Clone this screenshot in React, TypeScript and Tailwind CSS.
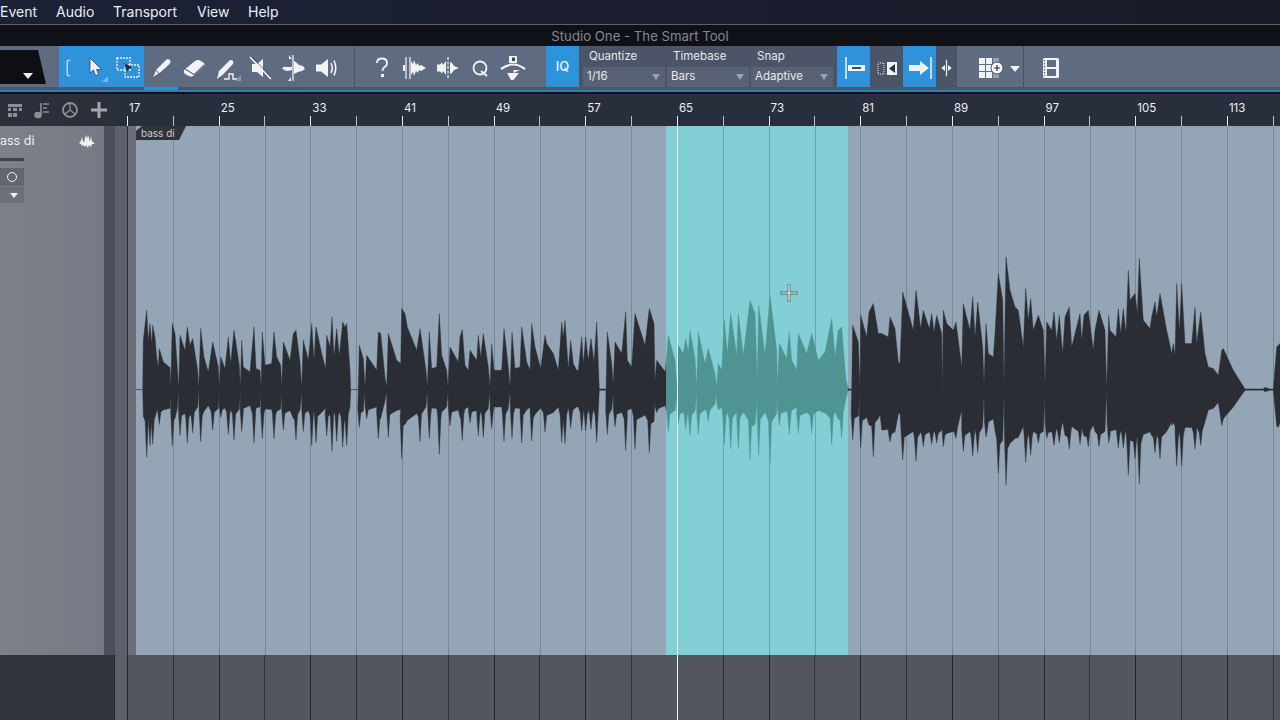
import React from 'react'

const font = { fontFamily: 'Inter, "Liberation Sans", sans-serif' }

// envelope points read off the picture: [x, y] in crop coords
const partA = [[18,298],[38,298],[40,150],[50,60],[55,150],[60,100],[65,160],[68,105],[75,140],[80,200],[85,230],[88,175],[100,215],[120,232],[122,290],[127,100],[135,130],[142,230],[146,295],[150,135],[165,180],[172,110],[180,165],[188,145],[203,240],[206,295],[212,115],[222,200],[235,245],[248,155],[265,230],[268,290],[272,200],[285,235],[295,140],[302,220],[312,120],[328,225],[331,290],[335,150],[340,230],[360,245],[372,110],[378,235],[390,240],[393,290],[397,125],[405,225],[425,220],[432,125],[440,200],[452,225],[455,290],[460,155],[480,210],[490,130],[498,120],[510,215],[515,290],[520,150],[535,210],[545,100],[552,210],[558,110],[575,190],[587,235],[590,135],[600,170],[606,80],[612,200],[620,115],[628,195],[638,95],[645,110],[650,100],[660,240],[662,298],[685,298],[688,165],[700,205],[705,290],[710,195],[740,240],[745,125],[752,130],[765,260],[770,290],[775,130],[800,210],[812,220],[815,55],[825,70],[832,110],[860,180],[870,115],[888,240],[892,290],[898,125],[905,235],[920,230],[928,70],[935,195],[950,240],[954,290],[960,170],[985,215],[990,140],[997,118],[1005,225],[1015,240],[1020,180],[1040,210],[1045,135],[1052,200],[1060,130],[1075,230],[1080,290],[1085,160],[1092,240],[1115,240],[1122,115],[1135,230],[1140,290],[1146,125],[1155,235],[1170,230],[1175,110],[1190,215],[1200,240]]
const partB = [[35,130],[45,200],[62,265],[75,165],[80,190],[100,220],[115,270],[125,125],[130,170],[135,120],[145,265],[152,180],[160,250],[170,270],[175,270],[185,170],[190,250],[197,170],[205,240],[213,175],[222,245],[230,125],[238,326],[258,326],[262,155],[275,250],[280,310],[285,185],[305,220],[317,95],[322,240],[335,260],[345,100],[375,195],[388,85],[402,130],[405,300],[410,240],[436,275],[445,165],[465,240],[470,320],[475,195],[490,220],[497,175],[505,215],[510,150],[525,235],[530,320],[535,155],[555,250],[565,205],[585,280],[590,320],[595,250],[605,270],[613,120],[622,220],[632,100],[650,225],[655,100],[670,225],[690,60],[705,100],[712,300],[716,75],[735,225],[750,45],[770,210],[772,320],[778,190],[800,235],[808,155],[815,240],[830,270],[835,160],[860,220],[875,160],[895,240],[915,215],[935,115],[945,230],[955,150],[965,140],[978,300],[985,326],[995,326],[998,135],[1015,185],[1020,320],[1022,105],[1040,170],[1047,95],[1060,70],[1075,160]]
const partC = [[5,250],[25,260],[30,200],[45,235],[55,335],[60,340],[68,125],[100,240],[108,120],[122,235],[130,180],[148,235],[155,190],[162,245],[170,195],[185,250],[187,410],[190,180],[200,220],[220,240],[228,215],[245,350],[250,160],[270,240],[278,140],[285,260],[293,155],[308,290],[312,400],[318,220],[325,310],[340,320],[345,250],[355,70],[368,150],[372,400],[378,20],[390,120],[405,170],[415,180],[430,290],[437,115],[445,210],[452,145],[460,240],[475,195],[490,240],[495,400],[500,215],[515,240],[522,185],[530,270],[538,195],[548,310],[555,200],[568,170],[575,290],[600,190],[605,270],[612,195],[625,180],[640,300],[645,240],[657,180],[675,240],[680,415],[686,195],[690,240],[708,260],[715,175],[722,250],[730,175],[738,250],[745,60],[750,150],[765,130],[772,190],[778,25],[790,210],[810,235],[815,200],[825,155],[830,200],[840,130],[860,240],[875,310],[880,280],[885,315],[890,100],[898,240],[905,100],[915,280],[935,280],[945,170],[950,280],[962,185],[975,310],[985,350],[1000,355],[1015,375],[1025,300],[1030,295],[1060,360],[1095,416],[1150,416],[1155,411],[1170,416],[1180,416],[1190,290],[1200,280]]

const MID = 389.6

const topOf = (pts: number[][], ox: number, mid: number) =>
  pts.map(([x, y]) => ({ x: ox + x / 3, d: (mid - y) / 3 }))

// lower half: thin spikes on a softer body, not a mirror of the top
const lowerOf = (pts: { x: number; d: number }[], k: number, knee: number) => {
  const body = (v: number) => (v < knee ? v * 0.9 : knee * 0.9 + (v - knee) * 0.3)
  const out: { x: number; d: number }[] = []
  pts.forEach((p, i) => {
    const prev = pts[i - 1]?.d ?? 0
    const next = pts[i + 1]?.d ?? 0
    if (p.d > prev && p.d > next && p.d > knee) {
      out.push({ x: p.x - 1.6, d: body((p.d + prev) / 2) })
      out.push({ x: p.x, d: p.d * k })
      out.push({ x: p.x + 1.6, d: body((p.d + next) / 2) })
    } else {
      out.push({ x: p.x, d: body(p.d) })
    }
  })
  return out
}

const a = topOf(partA, 130, 298)
const b = topOf(partB, 520, 328)
const c = topOf(partC, 880, 418)
const upper = [...a, ...b, ...c]
const lower = [...lowerOf(a, 0.85, 20), ...lowerOf(b, 0.78, 20), ...lowerOf(c, 0.72, 40)]
const wavePath =
  'M' + upper.map((p) => `${p.x.toFixed(1)} ${(MID - p.d).toFixed(1)}`).join('L') +
  'L' + [...lower].reverse().map((p) => `${p.x.toFixed(1)} ${(MID + p.d).toFixed(1)}`).join('L') + 'Z'

const bars = Array.from({ length: 26 }, (_, i) => i)
const labels: Record<number, string> = { 0: '17', 2: '25', 4: '33', 6: '41', 8: '49', 10: '57', 12: '65', 14: '73', 16: '81', 18: '89', 20: '97', 22: '105', 24: '113' }

const Ic = ({ children, w }: any) => (
  <div className={`${w} h-full flex items-center justify-center shrink-0 pt-[2px]`}>
    <svg width="28" height="28" viewBox="0 0 28 28" fill="#f1f2f3" stroke="none">{children}</svg>
  </div>
)

const Corner = () => <polygon points="27,27 27,21 21,27" fill="#8b97a9" />

const Select = ({ label, value }: { label: string; value: string }) => (
  <div className="w-[82px] flex flex-col shrink-0">
    <div className="h-[21px] pl-[6px] flex items-center text-[11.5px] text-[#e6e9ee]">{label}</div>
    <div className="h-[20px] bg-[#596274] flex items-center justify-between pl-[4px] pr-[5px] text-[11.5px] text-[#e6e9ee]">
      <span>{value}</span>
      <span className="w-0 h-0 border-x-[4px] border-x-transparent border-t-[6px] border-t-[#9aa3b2]" />
    </div>
  </div>
)

const Toolbar = () => (
  <div className="h-[41px] flex bg-[#5f6b81] shrink-0">
    <div className="w-[59px] h-full shrink-0 pt-[4px]">
      <div className="w-[46px] h-[34px] bg-[#0d0f14] [clip-path:polygon(0_0,38px_0,46px_100%,0_100%)] flex items-end justify-end pb-[5px] pr-[13px]">
        <span className="w-0 h-0 border-x-[5px] border-x-transparent border-t-[6px] border-t-[#f0f0f0]" />
      </div>
    </div>
    <div className="w-[85px] flex bg-[#2f93dc] shrink-0">
      <Ic w="w-[19px]"><path d="M16.5 2.5H14Q12 2.5 12 4.5V23.5Q12 25.5 14 25.5H16.5" fill="none" stroke="#eef3f8" strokeWidth="1.5" /></Ic>
      <Ic w="w-[34px]"><path d="M9 4L9 19L12.5 16L14.5 21.5L17.5 20.5L15.5 15.5L20.5 15.5Z" stroke="#1f2a3a" strokeWidth=".6" /><polygon points="27,28 27,22 21,28" fill="#7fb5e0" /></Ic>
      <Ic w="w-[32px]">
        <rect x="3" y="4" width="13" height="12" fill="none" stroke="#eef3f8" strokeWidth="1.3" strokeDasharray="2 1" />
        <rect x="11" y="11" width="14" height="12" fill="none" stroke="#eef3f8" strokeWidth="1.3" strokeDasharray="2 1" />
        <path d="M10 9L18 13L15 15L13 18Z" fill="#20324a" />
      </Ic>
    </div>
    <Ic w="w-[33px]"><path d="M6 24L9 16L19 6Q21 4 23 6Q24.5 8 22.5 10L12 19.5Z" /><path d="M6 24L12 19.5L9 16" fill="none" stroke="#3b4454" strokeWidth=".8" /></Ic>
    <Ic w="w-[34px]"><path d="M4 16L15 7Q17 5.5 19 6L24 9Q25 11 24 12L13 22Q11 23 9 22L5 20Q3 18 4 16Z" /><path d="M5 15L14 20.5L24 11" fill="none" stroke="#3b4454" strokeWidth="1" /></Ic>
    <Ic w="w-[34px]"><path d="M3 25L5 17L15 7Q17 5 19 7Q20 9 18.5 10.5L9 20.5Z" /><path d="M10 25H15V20H19V25H23" fill="none" stroke="#f1f2f3" strokeWidth="1.4" /><Corner /></Ic>
    <Ic w="w-[31px]"><path d="M5 10H10L16 5V23L10 18H5Z" /><path d="M3 3L24 25" stroke="#f1f2f3" strokeWidth="1.6" /><path d="M4.2 2L25 24" stroke="#3b4454" strokeWidth=".7" /></Ic>
    <Ic w="w-[34px]"><path d="M14 1V27" stroke="#f1f2f3" strokeWidth="1.3" /><path d="M10 1L13 5H10ZM15 7L18 9L20 11L24 12L26 15L23 17L19 18L15 20ZM12 23V27H9ZM3 14Q5 12 9 13L13 13V16L9 17Q5 17 3 14Z" /></Ic>
    <Ic w="w-[34px]"><path d="M3 10.5H8L15 5V23L8 17.5H3Z" /><path d="M18 9Q20.5 14 18 19M21 6.5Q24.5 14 21 21.5" fill="none" stroke="#f1f2f3" strokeWidth="1.6" /></Ic>
    <div className="w-[10px] shrink-0" />
    <div className="w-px bg-[#4a5366] shrink-0" />
    <div className="w-[10px] shrink-0" />
    <Ic w="w-[34px]"><path d="M9 9Q9 4.5 14 4.5Q19 4.5 19 9Q19 12 16 13.5Q14.5 14.5 14.5 17" fill="none" stroke="#f1f2f3" strokeWidth="1.8" /><rect x="13" y="20" width="3" height="3" /></Ic>
    <Ic w="w-[32px]"><path d="M5 3V25M9 3V25" stroke="#f1f2f3" strokeWidth="1.2" /><path d="M10 7L12 10L13 6L15 11L17 9L18 12L20 11L25 14L20 17L18 16L17 19L15 17L13 22L12 18L10 21Z" /><rect x="2" y="11" width="2" height="6" /></Ic>
    <Ic w="w-[33px]"><path d="M14 3V25" stroke="#f1f2f3" strokeWidth="1.2" strokeDasharray="3 1.5" /><path d="M3 10.5H6L8 8.5L9 11L12 7V21L9 17L8 19.5L6 17.5H3ZM16 8L18 9L20 12L25 14L20 16L18 19L16 20Z" /></Ic>
    <Ic w="w-[32px]"><circle cx="14" cy="14" r="6.5" fill="none" stroke="#f1f2f3" strokeWidth="1.8" /><path d="M15 17L21 22" stroke="#f1f2f3" strokeWidth="2" /></Ic>
    <Ic w="w-[34px]"><path d="M10 2H18V9H10Z" /><path d="M13 3.5H16V7H13Z" fill="#3b4454" /><path d="M2 15Q8 10.5 14 10.5Q20 10.5 26 15" fill="none" stroke="#f1f2f3" strokeWidth="2.2" /><path d="M7 16H21L14.5 19V16ZM8 19H20L14.5 26H12Z" /></Ic>
    <div className="w-[16px] shrink-0" />
    <div className="w-[33px] shrink-0 bg-[#2f93dc] flex items-center justify-center text-[13px] text-[#eaf2fa] font-medium pt-[1px]">IQ</div>
    <div className="w-[257px] shrink-0 bg-[#4c5467] flex pl-[4px] gap-[2px]">
      <Select label="Quantize" value="1/16" />
      <Select label="Timebase" value="Bars" />
      <Select label="Snap" value="Adaptive" />
    </div>
    <div className="w-px shrink-0 bg-[#4c5467]" />
    <div className="w-[33px] shrink-0 bg-[#2f93dc]">
      <Ic w="w-full"><path d="M6 3V25" stroke="#e8eef5" strokeWidth="1.6" /><rect x="8" y="11" width="17" height="6" /><rect x="12" y="13" width="9" height="2" fill="#3a4a60" /></Ic>
    </div>
    <div className="w-[33px] shrink-0 bg-[#4c5467]">
      <Ic w="w-full"><path d="M5 9H11V20H5Z" fill="none" stroke="#e8eef5" strokeWidth="1" strokeDasharray="1 1" /><rect x="14" y="8" width="10" height="13" /><path d="M22 10V19L16 14.5Z" fill="#2a3140" /></Ic>
    </div>
    <div className="w-[33px] shrink-0 bg-[#2f93dc]">
      <Ic w="w-full"><path d="M25 3V25" stroke="#e8eef5" strokeWidth="1.6" /><path d="M3 11H14V7L23 14L14 21V17H3Z" /></Ic>
    </div>
    <div className="w-[21px] shrink-0 bg-[#4c5467]">
      <Ic w="w-full"><path d="M14 3V25" stroke="#e8eef5" strokeWidth="1.6" /><path d="M12 10V18L7 14ZM16 10V18L21 14Z" /></Ic>
    </div>
    <div className="w-[21px] shrink-0" />
    <div className="w-[28px] shrink-0 flex items-center pt-[2px]">
      <svg width="28" height="24" viewBox="0 0 28 24">
        <g fill="#f1f2f3">
          <rect x="1" y="2" width="6" height="6" /><rect x="8" y="2" width="6" height="6" /><rect x="1" y="9" width="6" height="6" /><rect x="8" y="9" width="6" height="6" /><rect x="1" y="16" width="6" height="6" /><rect x="8" y="16" width="6" height="6" />
        </g>
        <rect x="15" y="2" width="6" height="20" fill="#98a2b3" />
        <circle cx="19" cy="12" r="6" fill="#f1f2f3" stroke="#4c5467" />
        <path d="M16 12H22M19 9V15" stroke="#2a3140" strokeWidth="1.2" />
      </svg>
    </div>
    <div className="w-[17px] shrink-0 flex items-center justify-center pt-[4px]">
      <span className="w-0 h-0 border-x-[5px] border-x-transparent border-t-[6px] border-t-[#f1f2f3]" />
    </div>
    <div className="w-px shrink-0 bg-[#4a5366]" />
    <div className="flex-1 pl-[13px] flex items-center pt-[3px]">
      <svg width="28" height="24" viewBox="0 0 28 24">
        <rect x="6" y="2" width="16" height="20" rx="1.5" fill="#f1f2f3" />
        <rect x="10" y="4" width="9" height="7" fill="#5f6b81" /><rect x="10" y="13" width="9" height="7" fill="#5f6b81" />
        <path d="M7.5 4V20" stroke="#5f6b81" strokeWidth="1.4" strokeDasharray="1.5 1.5" />
      </svg>
    </div>
  </div>
)

const Ruler = () => (
  <div className="h-[32px] flex shrink-0 bg-[#272e3c]">
    <div className="w-[115px] h-full shrink-0 bg-[#2b2f39] flex items-center pl-[7px] gap-[10px]">
      <svg width="16" height="16" viewBox="0 0 16 16" fill="#8c8f96"><path d="M1 2H15V5H1ZM1 6H4V9H1ZM6 6H10V9H6ZM12 6H15V9H12ZM1 11H5V15H1ZM6 11H10V15H6Z" /></svg>
      <svg width="18" height="18" viewBox="0 0 18 18" fill="none" stroke="#8c8f96" strokeWidth="1.6"><ellipse cx="5" cy="14" rx="3" ry="2.4" fill="#8c8f96" /><path d="M8 14V2M10 3H16M10 7H14M10 11H16" /></svg>
      <svg width="18" height="18" viewBox="0 0 18 18" fill="none" stroke="#8c8f96" strokeWidth="1.8"><circle cx="9" cy="9" r="7" /><path d="M9 3V9L4 13M9 9L14 13" strokeWidth="1.4" /></svg>
      <svg className="ml-px" width="18" height="18" viewBox="0 0 18 18" fill="none" stroke="#a4a7ad" strokeWidth="3"><path d="M9 1V17M1 9H17" /></svg>
    </div>
    <div className="w-[12px] shrink-0" />
    <div className="flex-1 flex overflow-hidden text-[11.5px] text-[#eef0f3]">
      {bars.map((i) => (
        <div key={i} className="w-[45.84px] h-full shrink-0 relative">
          <div className={`w-px h-[10px] mt-[22px] ${i % 2 === 0 ? 'bg-[#e8eaee]' : 'bg-[#b8bdc6]'}`} />
          {labels[i] && <span className="absolute left-[2px] top-[9px] leading-none">{labels[i]}</span>}
        </div>
      ))}
    </div>
  </div>
)

const TrackHeader = () => (
  <div className="w-[104px] h-full shrink-0 bg-gradient-to-r from-[#7b8089] to-[#757a84] text-[12.5px] text-[#f0f1f3]">
    <div className="h-[30px] flex items-center justify-between pr-[9px]">
      <span>ass di</span>
      <svg width="16" height="14" viewBox="0 0 16 14" fill="#f1f2f3"><path d="M0 9L2 7L3 3L4 7L5 9L6 4L7 1L8 5L9 1L10 4L11 8L12 2L13 7L16 10L13 10L12 13L10 11L9 14L7 11L6 13L4 11L3 12L2 10Z" /></svg>
    </div>
    <div className="w-[24px] h-[3px] bg-[#3f434d] mt-[2px]" />
    <div className="w-[24px] h-[18px] bg-[#62676f] mt-[7px] flex items-center justify-center">
      <span className="w-[10px] h-[10px] rounded-full border-[1.5px] border-[#f1f2f3]" />
    </div>
    <div className="w-[24px] h-[16px] bg-[#6b7079] mt-px flex items-center justify-end pr-[6px]">
      <span className="w-0 h-0 border-x-[4px] border-x-transparent border-t-[5px] border-t-[#f1f2f3]" />
    </div>
  </div>
)

const Arrange = () => (
  <div className="h-[529px] flex shrink-0">
    <TrackHeader />
    <div className="w-[11px] shrink-0 bg-[#4b4f5a]" />
    <div className="w-[12px] shrink-0 bg-[#5e616c]" />
    <div className="w-px shrink-0 bg-[#2a2e38]" />
    <div className="w-[8px] shrink-0 bg-[#6a6e79]" />
    <div className="flex-1 relative bg-[#94a6b6] overflow-hidden">
      <div className="absolute left-[530px] w-[182px] inset-y-0 bg-[#82d0d5]" />
      <div className="absolute inset-0 flex">
        <div className="w-[38px] shrink-0 border-r border-r-[#3c5064]/35" />
        {bars.slice(1, 25).map((i) => (
          <div key={i} className="w-[45.84px] shrink-0 border-r border-r-[#3c5064]/35" />
        ))}
      </div>
      <svg className="absolute inset-0" width="1144" height="529" viewBox="136 126 1144 529">
        <defs>
          <clipPath id="inside"><rect x="666" y="126" width="182" height="529" /></clipPath>
          <clipPath id="left"><rect x="136" y="126" width="530" height="529" /></clipPath>
          <clipPath id="right"><rect x="848" y="126" width="432" height="529" /></clipPath>
        </defs>
        <path d={wavePath} fill="#2a2d33" stroke="#2a2d33" strokeWidth=".4" clipPath="url(#left)" />
        <path d={wavePath} fill="#2a2d33" stroke="#2a2d33" strokeWidth=".4" clipPath="url(#right)" />
        <path d={wavePath} fill="#4f9392" stroke="#4f9392" strokeWidth=".4" clipPath="url(#inside)" />
      </svg>
      <div className="absolute left-0 top-0 w-[50px] h-[14px] bg-[#30333a] [clip-path:polygon(6px_0,100%_0,calc(100%-7px)_100%,0_100%,0_5px)] text-[10px] leading-[14px] pl-[5px] text-[#c9ccd1]">bass di</div>
      <svg className="absolute left-[643px] top-[157px]" width="20" height="20" viewBox="0 0 20 20">
        <path d="M10 1V19M1 10H19" stroke="#4f6468" strokeWidth="2.8" />
        <path d="M10 1.5V18.5M1.5 10H18.5" stroke="#f4f9f9" strokeWidth="1.2" />
      </svg>
    </div>
  </div>
)

const Lower = () => (
  <div className="flex-1 flex">
    <div className="w-[115px] shrink-0 bg-[#30343d] border-r border-r-[#23262e]" />
    <div className="w-[12px] shrink-0 bg-[#5c5f68]" />
    <div className="flex-1 flex bg-[#53565f] overflow-hidden">
      {bars.map((i) => (
        <div key={i} className="w-[45.84px] shrink-0">
          <div className={`w-px h-full ${i % 2 === 0 ? 'bg-[#20232b]' : 'bg-[#2f323a]'}`} />
        </div>
      ))}
    </div>
  </div>
)

export default function App() {
  return (
    <div className="w-[1280px] h-[720px] overflow-hidden flex flex-col relative bg-[#53565f]" style={font}>
      <div className="h-[24px] shrink-0 bg-gradient-to-r from-[#1b2136] to-[#191b28] flex items-center pb-[2px] text-[14px] text-[#eceef2]">
        <span className="w-[56px] shrink-0">Event</span>
        <span className="w-[57px] shrink-0">Audio</span>
        <span className="w-[84px] shrink-0">Transport</span>
        <span className="w-[51px] shrink-0">View</span>
        <span>Help</span>
      </div>
      <div className="h-px shrink-0 bg-[#5e6068]" />
      <div className="h-[21px] shrink-0 bg-[#101116] flex items-center justify-center pt-[2px] text-[13.2px] text-[#85888f]">
        Studio One - The Smart Tool
      </div>
      <Toolbar />
      <div className="h-[3px] shrink-0 bg-[#4d5566] pl-[144px]">
        <div className="w-[34px] h-full bg-[#2f8fd6]" />
      </div>
      <div className="h-[2px] shrink-0 bg-[#2c7fb6]" />
      <div className="h-[2px] shrink-0 bg-[#0e1117]" />
      <Ruler />
      <Arrange />
      <Lower />
      {/* playhead */}
      <div className="absolute left-[677px] top-[126px] bottom-0 w-px bg-[#eef7f8]" />
    </div>
  )
}
